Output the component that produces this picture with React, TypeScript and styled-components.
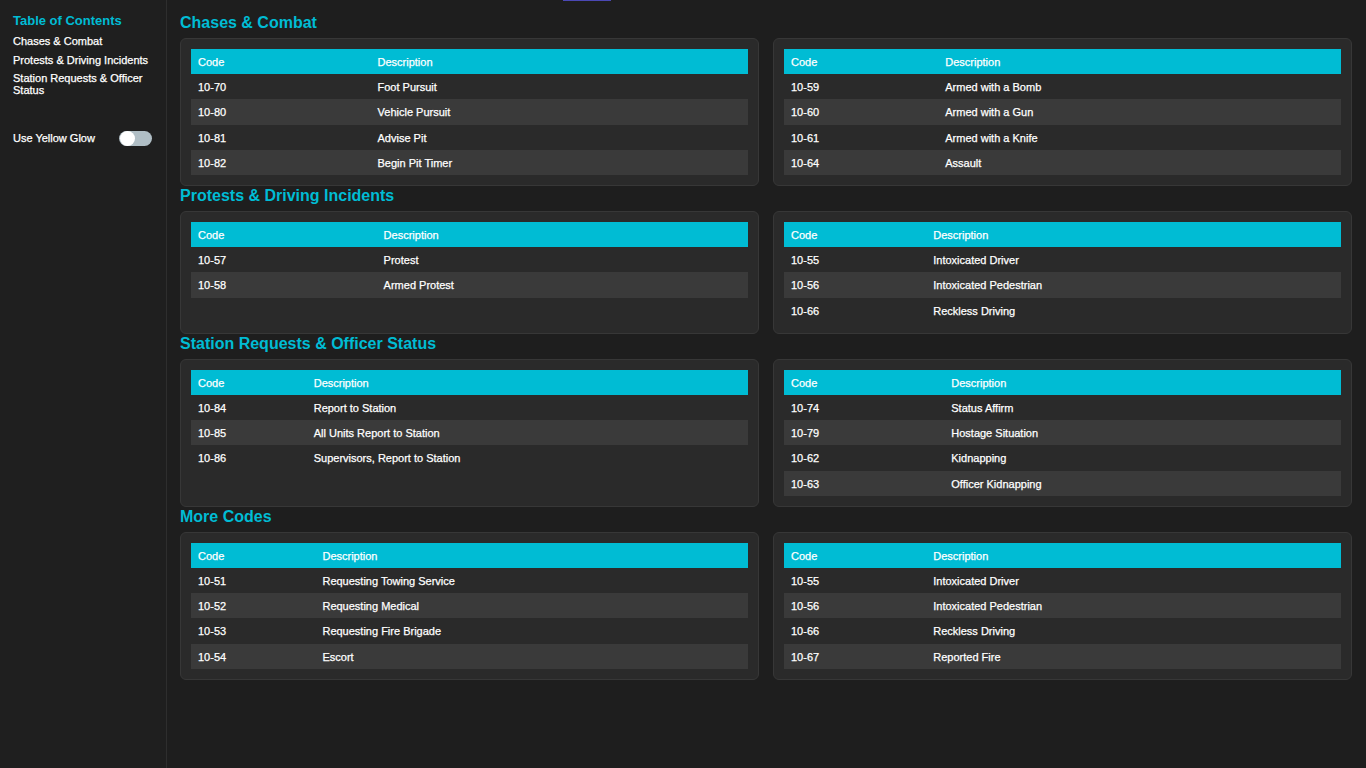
import React from "react";
import styled, { createGlobalStyle } from "styled-components";

const GlobalStyle = createGlobalStyle`
  html, body { margin: 0; padding: 0; background: #1e1e1e; }
  body { font-family: "Liberation Sans", Arial, sans-serif; color: #ffffff; }
  * { box-sizing: border-box; }
`;

type Row = [string, string];
type Section = { title: string; tables: [Row[], Row[]] };

const sections: Section[] = [
  {
    title: "Chases & Combat",
    tables: [
      [["10-70", "Foot Pursuit"], ["10-80", "Vehicle Pursuit"], ["10-81", "Advise Pit"], ["10-82", "Begin Pit Timer"]],
      [["10-59", "Armed with a Bomb"], ["10-60", "Armed with a Gun"], ["10-61", "Armed with a Knife"], ["10-64", "Assault"]],
    ],
  },
  {
    title: "Protests & Driving Incidents",
    tables: [
      [["10-57", "Protest"], ["10-58", "Armed Protest"]],
      [["10-55", "Intoxicated Driver"], ["10-56", "Intoxicated Pedestrian"], ["10-66", "Reckless Driving"]],
    ],
  },
  {
    title: "Station Requests & Officer Status",
    tables: [
      [["10-84", "Report to Station"], ["10-85", "All Units Report to Station"], ["10-86", "Supervisors, Report to Station"]],
      [["10-74", "Status Affirm"], ["10-79", "Hostage Situation"], ["10-62", "Kidnapping"], ["10-63", "Officer Kidnapping"]],
    ],
  },
  {
    title: "More Codes",
    tables: [
      [["10-51", "Requesting Towing Service"], ["10-52", "Requesting Medical"], ["10-53", "Requesting Fire Brigade"], ["10-54", "Escort"]],
      [["10-55", "Intoxicated Driver"], ["10-56", "Intoxicated Pedestrian"], ["10-66", "Reckless Driving"], ["10-67", "Reported Fire"]],
    ],
  },
];

const Layout = styled.div`
  display: flex;
  min-height: 100vh;
  background: #1e1e1e;
`;

const Sidebar = styled.nav`
  width: 167px;
  flex-shrink: 0;
  border-right: 1px solid #2e2e2e;
  background: #1f1f1f;
  padding: 13px 10px 0 13px;
`;

const TocTitle = styled.div`
  color: #00bcd4;
  font-size: 13px;
  font-weight: bold;
  line-height: 15px;
  margin-bottom: 4px;
`;

const TocLink = styled.a`
  display: block;
  color: #ffffff;
  font-size: 11px;
  line-height: 12px;
  padding: 3.3px 0;
  text-decoration: none;
  -webkit-text-stroke: 0.25px #ffffff;
`;

const ToggleRow = styled.label`
  display: flex;
  align-items: center;
  justify-content: space-between;
  margin-top: 31px;
  font-size: 11px;
  color: #ffffff;
  padding-right: 4px;
  -webkit-text-stroke: 0.25px #ffffff;
`;

const Track = styled.span`
  position: relative;
  display: inline-block;
  width: 33px;
  height: 15px;
  border-radius: 8px;
  background: #b0bec5;
`;

const Knob = styled.span`
  position: absolute;
  left: 1px;
  top: 0;
  width: 15px;
  height: 15px;
  border-radius: 50%;
  background: #ffffff;
`;

const Main = styled.main`
  flex: 1;
  padding: 0 14px 20px 13px;
`;

const TopMark = styled.div`
  width: 48px;
  height: 1px;
  margin-left: 383px;
  margin-bottom: 12px;
  background: #4b48b4;
`;

const SectionTitle = styled.h2`
  margin: 0 0 6px;
  color: #00bcd4;
  font-size: 16px;
  font-weight: bold;
  line-height: 19px;
`;

const CardGrid = styled.div`
  display: grid;
  grid-template-columns: 1fr 1fr;
  gap: 14px;
`;

const Card = styled.div`
  background: #2a2a2a;
  border: 1px solid #373737;
  border-radius: 6px;
  padding: 10px;
`;

const Table = styled.table`
  width: 100%;
  border-collapse: collapse;
  font-size: 11px;
  line-height: 13.2px;
  -webkit-text-stroke: 0.25px #ffffff;
`;

const Th = styled.th`
  background: #00bcd4;
  color: #ffffff;
  font-weight: normal;
  text-align: left;
  padding: 7px 7px 5px;
`;

const Tr = styled.tr<{ $alt: boolean }>`
  background: ${(p) => (p.$alt ? "#3a3a3a" : "transparent")};
`;

const Td = styled.td`
  padding: 7px 7px 5px;
  color: #ffffff;
`;

const CodeTable: React.FC<{ rows: Row[] }> = ({ rows }) => (
  <Card>
    <Table>
      <thead>
        <tr>
          <Th>Code</Th>
          <Th>Description</Th>
        </tr>
      </thead>
      <tbody>
        {rows.map(([c, d], i) => (
          <Tr key={c + i} $alt={i % 2 === 1}>
            <Td>{c}</Td>
            <Td>{d}</Td>
          </Tr>
        ))}
      </tbody>
    </Table>
  </Card>
);

export default function App() {
  return (
    <>
      <GlobalStyle />
      <Layout>
        <Sidebar>
          <TocTitle>Table of Contents</TocTitle>
          <TocLink href="#chases">Chases &amp; Combat</TocLink>
          <TocLink href="#protests">Protests &amp; Driving Incidents</TocLink>
          <TocLink href="#station">Station Requests &amp; Officer Status</TocLink>
          <ToggleRow>
            <span>Use Yellow Glow</span>
            <Track>
              <Knob />
            </Track>
          </ToggleRow>
        </Sidebar>
        <Main>
          <TopMark />
          {sections.map((s) => (
            <section key={s.title}>
              <SectionTitle>{s.title}</SectionTitle>
              <CardGrid>
                <CodeTable rows={s.tables[0]} />
                <CodeTable rows={s.tables[1]} />
              </CardGrid>
            </section>
          ))}
        </Main>
      </Layout>
    </>
  );
}
